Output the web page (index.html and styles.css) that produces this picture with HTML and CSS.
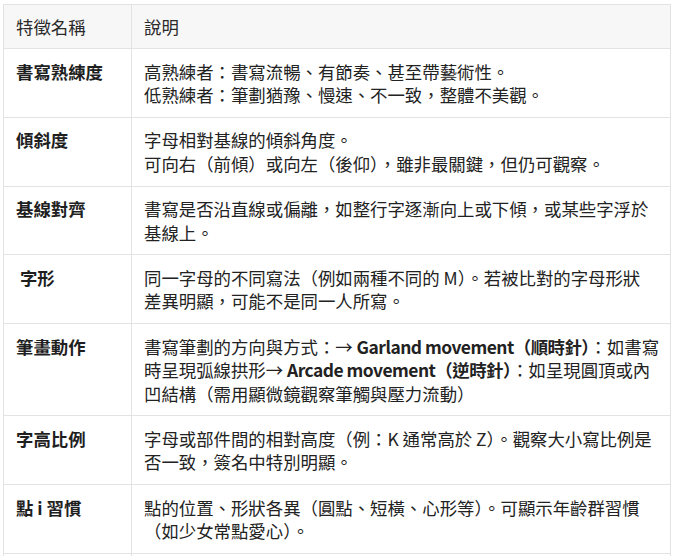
FILE: index.html
```html
<!DOCTYPE html>
<html lang="zh-Hant">
<head>
<meta charset="utf-8">
<title>筆跡特徵</title>
<link rel="stylesheet" href="styles.css">
</head>
<body>
<table class="feat">
  <colgroup>
    <col class="c-name">
    <col class="c-desc">
  </colgroup>
  <thead>
    <tr><th>特徵名稱</th><th>說明</th></tr>
  </thead>
  <tbody>
    <tr>
      <td class="name">書寫熟練度</td>
      <td>高熟練者：書寫流暢、有節奏、甚至帶藝術性。<br>低熟練者：筆劃猶豫、慢速、不一致，整體不美觀。</td>
    </tr>
    <tr>
      <td class="name">傾斜度</td>
      <td>字母相對基線的傾斜角度。<br>可向右（前傾）或向左（後仰），雖非最關鍵，但仍可觀察。</td>
    </tr>
    <tr>
      <td class="name">基線對齊</td>
      <td>書寫是否沿直線或偏離，如整行字逐漸向上或下傾，或某些字浮於<br>基線上。</td>
    </tr>
    <tr>
      <td class="name">&nbsp;字形</td>
      <td>同一字母的不同寫法（例如兩種不同的 M）。若被比對的字母形狀<br>差異明顯，可能不是同一人所寫。</td>
    </tr>
    <tr>
      <td class="name">筆畫動作</td>
      <td>書寫筆劃的方向與方式：→ <b>Garland movement（順時針）</b>：如書寫<br>時呈現弧線拱形→ <b>Arcade movement（逆時針）</b>：如呈現圓頂或內<br>凹結構（需用顯微鏡觀察筆觸與壓力流動）</td>
    </tr>
    <tr>
      <td class="name">字高比例</td>
      <td>字母或部件間的相對高度（例：K 通常高於 Z）。觀察大小寫比例是否一致，簽名中特別明顯。</td>
    </tr>
    <tr>
      <td class="name">點 i 習慣</td>
      <td>點的位置、形狀各異（圓點、短橫、心形等）。可顯示年齡群習慣（如少女常點愛心）。</td>
    </tr>
    <tr>
      <td class="name">&nbsp;</td>
      <td>&nbsp;</td>
    </tr>
  </tbody>
</table>
</body>
</html>
```
FILE: styles.css
```css
html, body {
  margin: 0;
  padding: 0;
  background: #ffffff;
}

body {
  font-family: "Noto Sans CJK TC", "Noto Sans", sans-serif;
  font-size: 17.4px;
  line-height: 23.5px;
  color: #222222;
  overflow: hidden;
}

.feat {
  margin: 4px 0 0 3px;
  width: 668px;
  table-layout: fixed;
  border-collapse: collapse;
}

.c-name {
  width: 128px;
}

.feat th,
.feat td {
  border: 1px solid #e3e3e3;
  padding: 10.5px 4px 10.25px 12px;
  text-align: left;
  vertical-align: top;
}

.feat th {
  padding-top: 10px;
  padding-bottom: 9.5px;
  font-weight: 400;
  background: #f7f7f7;
  color: #2a2a2a;
}

.feat td.name {
  font-weight: 700;
  color: #1f1f1f;
}

.feat b {
  font-weight: 700;
  letter-spacing: -0.5px;
}
```
